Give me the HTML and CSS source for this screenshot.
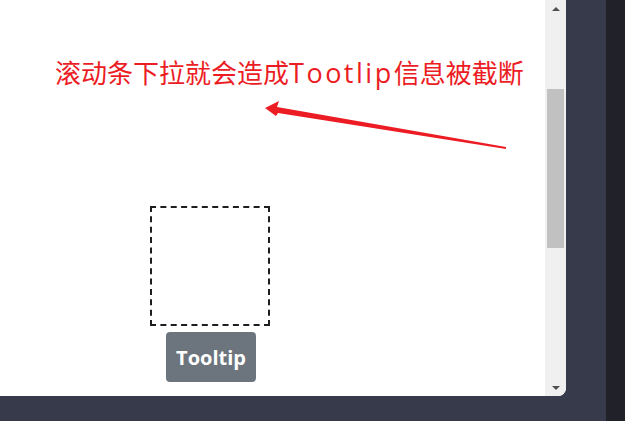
FILE: index.html
```html
<!DOCTYPE html>
<html lang="zh-CN">
<head>
<meta charset="utf-8">
<title>Tooltip</title>
<link rel="stylesheet" href="styles.css">
</head>
<body>
<div class="app">
  <div class="main">
    <div class="panel">
      <div class="content">
        <h1 class="note">滚动条下拉就会造成<span class="latin">Tootlip</span>信息被截断</h1>
        <svg class="arrow" width="545" height="200" viewBox="0 0 545 200">
          <polygon points="265,108 279,101 277,107 506,147 506,149 278,113 276,116" fill="#ec1c24"/>
        </svg>
        <div class="target"></div>
        <div class="tooltip">Tooltip</div>
      </div>
      <div class="scrollbar">
        <div class="sb-btn"><span class="tri-up"></span></div>
        <div class="sb-track"><div class="sb-thumb"></div></div>
        <div class="sb-btn"><span class="tri-down"></span></div>
      </div>
    </div>
  </div>
  <div class="strip"></div>
</div>
</body>
</html>
```
FILE: styles.css
```css
html, body {
  margin: 0;
  padding: 0;
}
body {
  width: 625px;
  height: 421px;
  overflow: hidden;
  background: #363a4b;
  font-family: "Noto Sans CJK SC", "Noto Sans", sans-serif;
}
.app {
  display: flex;
  height: 421px;
}
.main {
  width: 606px;
  background: #363a4b;
}
.strip {
  flex: 1;
  background: #212129;
}
.panel {
  width: 566px;
  height: 396px;
  background: #ffffff;
  border-bottom-right-radius: 8px;
  overflow: hidden;
  display: flex;
}
.content {
  position: relative;
  flex: 1;
  padding-top: 53px;
}
.note {
  height: 38px;
  margin: 0 0 0 55px;
  font-size: 26px;
  line-height: 38px;
  font-weight: 400;
  color: #ec1c24;
  white-space: nowrap;
}
.latin {
  font-family: "Open Sans", "Noto Sans", sans-serif;
  font-size: 27px;
  line-height: 1;
  letter-spacing: 2.5px;
}
.arrow {
  position: absolute;
  left: 0;
  top: 0;
}
.target {
  width: 116px;
  height: 116px;
  border: 2px dashed #1e1e1e;
  margin: 115px 0 0 150px;
}
.tooltip {
  width: 90px;
  height: 50px;
  margin: 6px 0 0 166px;
  background: #6c757d;
  border-radius: 4px;
  color: #ffffff;
  font-family: "Open Sans", "Noto Sans", sans-serif;
  font-weight: 700;
  font-size: 20px;
  display: flex;
  align-items: center;
  justify-content: center;
}
.scrollbar {
  width: 21px;
  background: #f0f0f0;
  display: flex;
  flex-direction: column;
}
.sb-btn {
  height: 17px;
  display: flex;
  align-items: center;
  justify-content: center;
}
.sb-track {
  flex: 1;
  padding: 72px 2px 0;
}
.sb-thumb {
  height: 159px;
  background: #c1c1c1;
}
.tri-up, .tri-down {
  width: 0;
  height: 0;
  border-left: 4.5px solid transparent;
  border-right: 4.5px solid transparent;
}
.tri-up {
  border-bottom: 4.5px solid #505050;
}
.tri-down {
  border-top: 4.5px solid #505050;
}
```
